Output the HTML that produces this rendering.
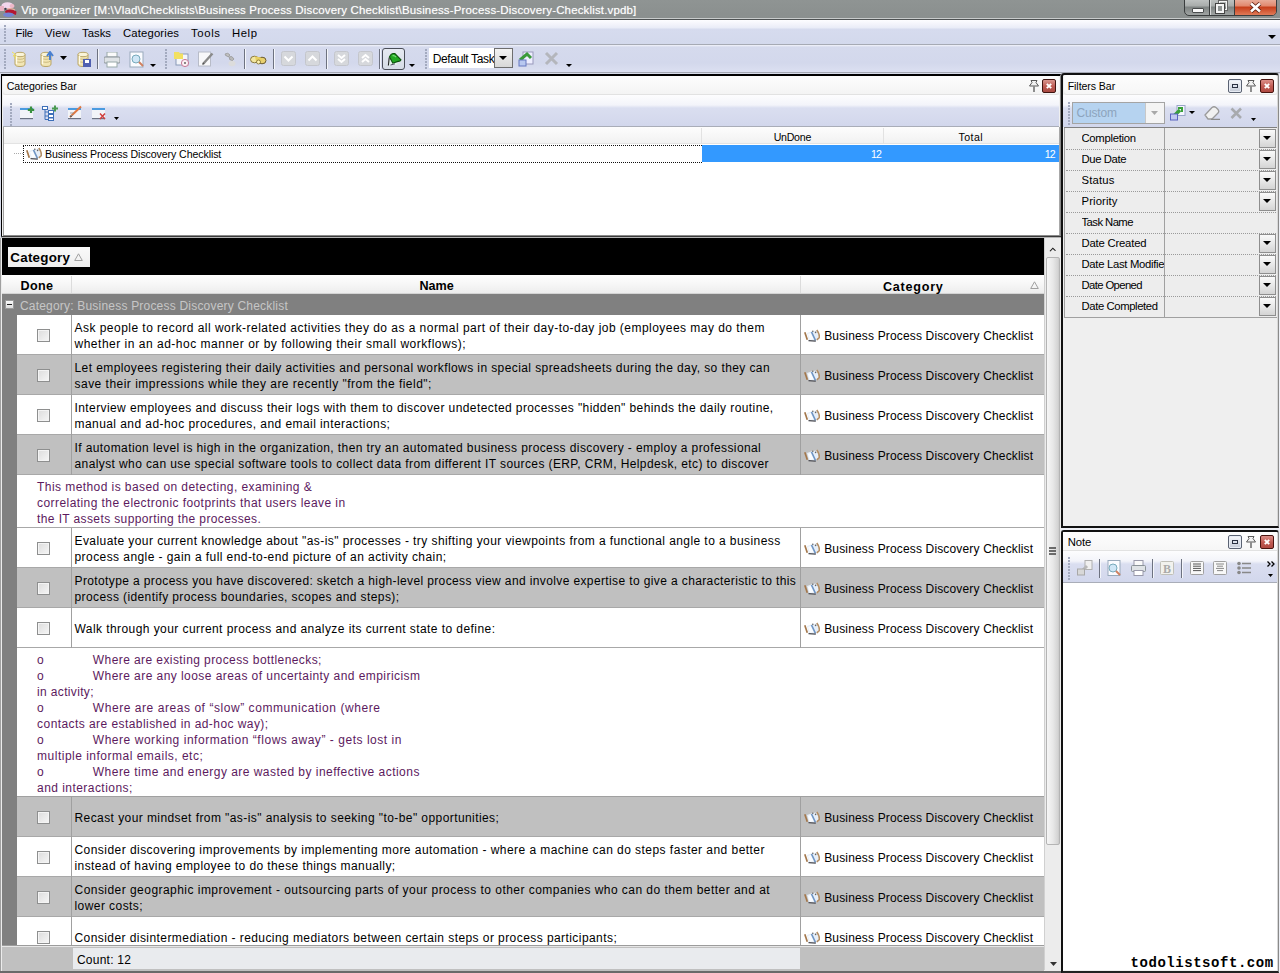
<!DOCTYPE html>
<html><head><meta charset="utf-8"><style>
html,body{margin:0;padding:0;}
body{width:1280px;height:973px;overflow:hidden;position:relative;background:#d8dcea;font-family:'Liberation Sans', sans-serif;}

</style></head><body>
<div style="position:absolute;left:0px;top:0px;width:1280px;height:18px;background:linear-gradient(#8f9493,#8a8f8e)"></div><div style="position:absolute;left:0px;top:18px;width:1280px;height:1px;background:#c9cccc"></div><div style="position:absolute;left:0px;top:19px;width:1280px;height:1px;background:#4e5253"></div><svg style="position:absolute;left:0px;top:1px" width="17" height="17" viewBox="0 0 17 17"><ellipse cx="7.5" cy="4.5" rx="6" ry="3.2" fill="#f2d6ec"/><rect x="0" y="5" width="4" height="5" fill="#eab4c4"/><ellipse cx="12" cy="5" rx="2.5" ry="2" fill="#eeb8c8"/><path d="M5 10Q10 6.5 16.5 10.5L16 14Q10 11 6 13Z" fill="#b41830"/><path d="M7 8Q11 7 15 9" stroke="#f0b0a0" stroke-width="1.2" fill="none"/><ellipse cx="8.5" cy="13.8" rx="5.5" ry="2.2" fill="#7584d2"/><circle cx="5.5" cy="7.8" r="1.1" fill="#3a3a48"/></svg><div style="position:absolute;left:21.25px;top:3.59px;font:400 11.5px/13.22px 'Liberation Sans', sans-serif;color:#fff;white-space:pre;letter-spacing:0.152px;text-shadow:0 0 1px rgba(255,255,255,.5)">Vip organizer [M:\Vlad\Checklists\Business Process Discovery Checklist\Business-Process-Discovery-Checklist.vpdb]</div><div style="position:absolute;left:1184px;top:-3px;width:91px;height:17px;border:1px solid #3a3d3e;border-radius:0 0 5px 5px;overflow:hidden;background:linear-gradient(#c4c8c7,#a9adac 45%,#7f8483 55%,#a0a4a3)"><div style="position:absolute;left:24px;top:0;width:1px;height:17px;background:#3a3d3e"></div><div style="position:absolute;left:25px;top:0;width:1px;height:17px;background:#d8dada"></div><div style="position:absolute;left:49px;top:0;width:1px;height:17px;background:#3a3d3e"></div><div style="position:absolute;left:50px;top:0;width:41px;height:17px;background:linear-gradient(#eab7a6,#e28a70 45%,#c7401c 55%,#e07a58)"></div></div><div style="position:absolute;left:1192px;top:8px;width:10px;height:3px;background:#f8f8f8;border:1px solid #4a4d4e;border-radius:1px"></div><div style="position:absolute;left:1219px;top:1px;width:6px;height:7px;border:1px solid #f4f4f4;box-shadow:0 0 0 1px #666"></div><div style="position:absolute;left:1216px;top:4px;width:4px;height:5px;border:2px solid #f4f4f4;background:#8f9493;box-shadow:0 0 0 1px #444"></div><svg style="position:absolute;left:1249px;top:2px" width="13" height="11" viewBox="0 0 13 11"><path d="M2 1.5 L11 9.5 M11 1.5 L2 9.5" stroke="#5a1d10" stroke-width="4.2"/><path d="M2 1.5 L11 9.5 M11 1.5 L2 9.5" stroke="#fff" stroke-width="2.6"/></svg><div style="position:absolute;left:0px;top:20px;width:1280px;height:24px;background:linear-gradient(#fdfdff 0px,#f1f2fa 5px,#e9ecf7 8px,#d6dbee 9px,#d3d9ec 24px)"></div><div style="position:absolute;left:0px;top:44px;width:1280px;height:1px;background:#a6aab4"></div><div style="position:absolute;left:4px;top:25px;width:2px;height:2px;background:#a3aabf"></div><div style="position:absolute;left:4px;top:28px;width:2px;height:2px;background:#a3aabf"></div><div style="position:absolute;left:4px;top:31px;width:2px;height:2px;background:#a3aabf"></div><div style="position:absolute;left:4px;top:34px;width:2px;height:2px;background:#a3aabf"></div><div style="position:absolute;left:4px;top:37px;width:2px;height:2px;background:#a3aabf"></div><div style="position:absolute;left:4px;top:40px;width:2px;height:2px;background:#a3aabf"></div><div style="position:absolute;left:15.6px;top:26.97px;font:400 11.3px/12.99px 'Liberation Sans', sans-serif;color:#000;white-space:pre;letter-spacing:-0.268px;">File</div><div style="position:absolute;left:45px;top:26.97px;font:400 11.3px/12.99px 'Liberation Sans', sans-serif;color:#000;white-space:pre;letter-spacing:0.234px;">View</div><div style="position:absolute;left:82px;top:26.97px;font:400 11.3px/12.99px 'Liberation Sans', sans-serif;color:#000;white-space:pre;letter-spacing:0.027px;">Tasks</div><div style="position:absolute;left:123px;top:26.97px;font:400 11.3px/12.99px 'Liberation Sans', sans-serif;color:#000;white-space:pre;letter-spacing:0.151px;">Categories</div><div style="position:absolute;left:191px;top:26.97px;font:400 11.3px/12.99px 'Liberation Sans', sans-serif;color:#000;white-space:pre;letter-spacing:0.656px;">Tools</div><div style="position:absolute;left:232px;top:26.97px;font:400 11.3px/12.99px 'Liberation Sans', sans-serif;color:#000;white-space:pre;letter-spacing:0.589px;">Help</div><svg style="position:absolute;left:1268px;top:35px" width="8" height="5" viewBox="0 0 8 5"><path d="M0 0H8L4 4Z" fill="#000"/></svg><div style="position:absolute;left:0px;top:45px;width:1280px;height:28px;background:linear-gradient(#f2f4fa 0px,#d5daed 2px,#d3d8ec 18px,#dce0f1 27px)"></div><div style="position:absolute;left:0px;top:72px;width:1280px;height:1px;background:#a4a8b4"></div><div style="position:absolute;left:4px;top:49px;width:2px;height:2px;background:#a3aabf"></div><div style="position:absolute;left:4px;top:52px;width:2px;height:2px;background:#a3aabf"></div><div style="position:absolute;left:4px;top:55px;width:2px;height:2px;background:#a3aabf"></div><div style="position:absolute;left:4px;top:58px;width:2px;height:2px;background:#a3aabf"></div><div style="position:absolute;left:4px;top:61px;width:2px;height:2px;background:#a3aabf"></div><div style="position:absolute;left:4px;top:64px;width:2px;height:2px;background:#a3aabf"></div><div style="position:absolute;left:4px;top:67px;width:2px;height:2px;background:#a3aabf"></div><div style="position:absolute;left:165px;top:49px;width:2px;height:2px;background:#a3aabf"></div><div style="position:absolute;left:165px;top:52px;width:2px;height:2px;background:#a3aabf"></div><div style="position:absolute;left:165px;top:55px;width:2px;height:2px;background:#a3aabf"></div><div style="position:absolute;left:165px;top:58px;width:2px;height:2px;background:#a3aabf"></div><div style="position:absolute;left:165px;top:61px;width:2px;height:2px;background:#a3aabf"></div><div style="position:absolute;left:165px;top:64px;width:2px;height:2px;background:#a3aabf"></div><div style="position:absolute;left:165px;top:67px;width:2px;height:2px;background:#a3aabf"></div><div style="position:absolute;left:425px;top:49px;width:2px;height:2px;background:#a3aabf"></div><div style="position:absolute;left:425px;top:52px;width:2px;height:2px;background:#a3aabf"></div><div style="position:absolute;left:425px;top:55px;width:2px;height:2px;background:#a3aabf"></div><div style="position:absolute;left:425px;top:58px;width:2px;height:2px;background:#a3aabf"></div><div style="position:absolute;left:425px;top:61px;width:2px;height:2px;background:#a3aabf"></div><div style="position:absolute;left:425px;top:64px;width:2px;height:2px;background:#a3aabf"></div><div style="position:absolute;left:425px;top:67px;width:2px;height:2px;background:#a3aabf"></div><div style="position:absolute;left:97px;top:49px;width:1px;height:20px;background:#6d7280"></div><div style="position:absolute;left:98px;top:49px;width:1px;height:20px;background:#f4f6fb"></div><div style="position:absolute;left:244px;top:49px;width:1px;height:20px;background:#6d7280"></div><div style="position:absolute;left:245px;top:49px;width:1px;height:20px;background:#f4f6fb"></div><div style="position:absolute;left:273px;top:49px;width:1px;height:20px;background:#6d7280"></div><div style="position:absolute;left:274px;top:49px;width:1px;height:20px;background:#f4f6fb"></div><div style="position:absolute;left:326px;top:49px;width:1px;height:20px;background:#6d7280"></div><div style="position:absolute;left:327px;top:49px;width:1px;height:20px;background:#f4f6fb"></div><div style="position:absolute;left:379px;top:49px;width:1px;height:20px;background:#6d7280"></div><div style="position:absolute;left:380px;top:49px;width:1px;height:20px;background:#f4f6fb"></div><svg style="position:absolute;left:12px;top:51px" width="16" height="17" viewBox="0 0 16 17"><path d="M3 3.5V13A5 2.5 0 0 0 13 13V3.5" fill="#f2e6b4" stroke="#b9a567" stroke-width="1"/><ellipse cx="8" cy="3.5" rx="5" ry="2.2" fill="#faf4d8" stroke="#b9a567"/><path d="M3.5 7A4.8 2 0 0 0 12.5 7M3.5 10A4.8 2 0 0 0 12.5 10" fill="none" stroke="#cdbb80"/><path d="M4.5 5V13" stroke="#fffbe8" stroke-width="1.3"/><path d="M0 1L3 3L1 5L4 5L3 8" stroke="#f0e060" fill="none"/></svg><svg style="position:absolute;left:38px;top:51px" width="16" height="17" viewBox="0 0 16 17"><path d="M3 3.5V13A5 2.5 0 0 0 13 13V3.5" fill="#f2e6b4" stroke="#b9a567" stroke-width="1"/><ellipse cx="8" cy="3.5" rx="5" ry="2.2" fill="#faf4d8" stroke="#b9a567"/><path d="M3.5 7A4.8 2 0 0 0 12.5 7M3.5 10A4.8 2 0 0 0 12.5 10" fill="none" stroke="#cdbb80"/><path d="M4.5 5V13" stroke="#fffbe8" stroke-width="1.3"/><path d="M12 9V2M9 5L12 1L15 5" stroke="#4a80d0" stroke-width="2" fill="none"/></svg><svg style="position:absolute;left:60px;top:56px" width="7" height="5" viewBox="0 0 7 5"><path d="M0 0H7L3.5 4Z" fill="#000"/></svg><svg style="position:absolute;left:75px;top:51px" width="16" height="17" viewBox="0 0 16 17"><path d="M3 3.5V13A5 2.5 0 0 0 13 13V3.5" fill="#f2e6b4" stroke="#b9a567" stroke-width="1"/><ellipse cx="8" cy="3.5" rx="5" ry="2.2" fill="#faf4d8" stroke="#b9a567"/><path d="M3.5 7A4.8 2 0 0 0 12.5 7M3.5 10A4.8 2 0 0 0 12.5 10" fill="none" stroke="#cdbb80"/><path d="M4.5 5V13" stroke="#fffbe8" stroke-width="1.3"/><rect x="8" y="8" width="8" height="8" fill="#5060b0"/><rect x="10" y="9" width="4" height="3" fill="#fff"/></svg><svg style="position:absolute;left:104px;top:52px" width="16" height="16" viewBox="0 0 16 16"><rect x="3" y="0" width="10" height="5" fill="#fafafa" stroke="#9aa"/><rect x="0" y="5" width="16" height="6" rx="1" fill="#dfe3e6" stroke="#8a9298"/><rect x="3" y="10" width="10" height="5" fill="#fff" stroke="#9aa"/></svg><svg style="position:absolute;left:129px;top:51px" width="16" height="17" viewBox="0 0 16 17"><rect x="1" y="1" width="13" height="15" fill="#fafbff" stroke="#9ab"/><circle cx="7" cy="8" r="4" fill="#cfe6f6" stroke="#7ab"/><path d="M10 11L14 15" stroke="#d08060" stroke-width="2"/></svg><svg style="position:absolute;left:150px;top:64px" width="6" height="4" viewBox="0 0 6 4"><path d="M0 0H6L3 3Z" fill="#000"/></svg><svg style="position:absolute;left:174px;top:51px" width="16" height="16" viewBox="0 0 16 16"><rect x="2" y="3" width="12" height="11" fill="#f4f6fa" stroke="#8a9ab8" stroke-width="1"/><path d="M0 1H5L6 2.5H9V8H0Z" fill="#f2e060"/><circle cx="11" cy="12" r="3.6" fill="#fbf0f4" stroke="#c87898" stroke-width="1"/><circle cx="11" cy="12" r="0.9" fill="#555"/></svg><svg style="position:absolute;left:198px;top:51px" width="16" height="16" viewBox="0 0 16 16"><rect x="0.5" y="1" width="12" height="14" fill="#f8f8fa" stroke="#b8bcc8"/><path d="M5 13L14.5 2.5" stroke="#8a8a8a" stroke-width="2.4"/><path d="M4.5 13.5L6 12" stroke="#555" stroke-width="1.2"/></svg><svg style="position:absolute;left:222px;top:51px" width="16" height="16" viewBox="0 0 16 16"><path d="M3 3Q6 1 8 4L6 6Q5 4 4 5Z" fill="#c0c0c0" stroke="#999" stroke-width="0.8"/><path d="M7 6Q10 4 12 8L10 10Q9 8 8 9Z" fill="#b8b8b8" stroke="#999" stroke-width="0.8"/><ellipse cx="10" cy="12.5" rx="3.5" ry="2.8" fill="#dcdcdc"/></svg><svg style="position:absolute;left:249px;top:54px" width="18" height="12" viewBox="0 0 18 12"><ellipse cx="5.5" cy="5.5" rx="4" ry="3.3" fill="#f2e6a0" stroke="#8a7a40" stroke-width="1"/><ellipse cx="13" cy="6.5" rx="4" ry="3.3" fill="#e8d070" stroke="#6a5a30" stroke-width="1"/><path d="M6 2.5L12 3.5L13 7L7 7Z" fill="#e8cf60"/><ellipse cx="9.5" cy="8" rx="2" ry="2" fill="#fff4b0" stroke="#7a6a30" stroke-width="0.8"/></svg><svg style="position:absolute;left:281px;top:51px" width="15" height="15" viewBox="0 0 15 15"><rect x="0.5" y="0.5" width="14" height="14" rx="2" fill="#d6d8dc" stroke="#c4c6cc"/><path d="M3.5 5.5L7.5 9.5L11.5 5.5" stroke="#fff" stroke-width="2" fill="none"/></svg><svg style="position:absolute;left:305px;top:51px" width="15" height="15" viewBox="0 0 15 15"><rect x="0.5" y="0.5" width="14" height="14" rx="2" fill="#d6d8dc" stroke="#c4c6cc"/><path d="M3.5 9.5L7.5 5.5L11.5 9.5" stroke="#fff" stroke-width="2" fill="none"/></svg><svg style="position:absolute;left:334px;top:51px" width="15" height="15" viewBox="0 0 15 15"><rect x="0.5" y="0.5" width="14" height="14" rx="2" fill="#d6d8dc" stroke="#c4c6cc"/><path d="M4 4L7.5 7L11 4M4 8L7.5 11L11 8" stroke="#fff" stroke-width="2" fill="none"/></svg><svg style="position:absolute;left:358px;top:51px" width="15" height="15" viewBox="0 0 15 15"><rect x="0.5" y="0.5" width="14" height="14" rx="2" fill="#d6d8dc" stroke="#c4c6cc"/><path d="M4 7L7.5 4L11 7M4 11L7.5 8L11 11" stroke="#fff" stroke-width="2" fill="none"/></svg><div style="position:absolute;left:382px;top:48px;width:23px;height:22px;box-sizing:border-box;border:1px solid #4a4e58;border-radius:3px;background:linear-gradient(#e6eaf2,#d6dce6)"></div><svg style="position:absolute;left:386px;top:51px" width="16" height="16" viewBox="0 0 16 16"><path d="M2 14.5L3 6L12 9L11 13.5Z" fill="#e4f4ec"/><path d="M3.2 6.5L2.4 14.5" stroke="#222" stroke-width="1.1"/><path d="M3.5 6Q5 1.8 8.8 2.6L15 8.8Q14.2 10.6 12 10.4L6.8 12.2Z" fill="#22a822" stroke="#0b4f0b" stroke-width="1.1"/><path d="M6.5 5Q8 4 10 6" stroke="#7ade7a" stroke-width="1.2" fill="none"/><path d="M4.5 14L9 12.8" stroke="#556" stroke-width="1"/></svg><svg style="position:absolute;left:409px;top:64px" width="6" height="4" viewBox="0 0 6 4"><path d="M0 0H6L3 3Z" fill="#000"/></svg><div style="position:absolute;left:429px;top:48px;width:84px;height:20px;background:#fff"></div><div style="position:absolute;left:432.7px;top:52.74px;font:400 12px/13.80px 'Liberation Sans', sans-serif;color:#000;white-space:pre;letter-spacing:-0.347px;">Default Task</div><div style="position:absolute;left:494px;top:48px;width:19px;height:20px;background:linear-gradient(#f3f3f3,#d8d8d8);border:1px solid #6e6e6e;box-sizing:border-box"></div><svg style="position:absolute;left:499px;top:56px" width="8" height="5" viewBox="0 0 8 5"><path d="M0 0H8L4 4Z" fill="#000"/></svg><svg style="position:absolute;left:518px;top:51px" width="17" height="16" viewBox="0 0 17 16"><rect x="5" y="1" width="10" height="12" fill="#eef" stroke="#99b"/><path d="M2 9L9 3L13 7" stroke="#3a9a3a" stroke-width="3" fill="none"/><rect x="1" y="9" width="7" height="6" fill="#b8c8f0" stroke="#6678c0"/></svg><svg style="position:absolute;left:544px;top:51px" width="15" height="15" viewBox="0 0 15 15"><path d="M2 2L13 13M13 2L2 13" stroke="#b4b6bc" stroke-width="3"/></svg><svg style="position:absolute;left:566px;top:64px" width="6" height="4" viewBox="0 0 6 4"><path d="M0 0H6L3 3Z" fill="#000"/></svg><div style="position:absolute;left:1px;top:74px;width:1060px;height:164px;background:#f0f0f0;border:1px solid #000;box-sizing:border-box;border-right-color:#888"></div><div style="position:absolute;left:2px;top:75px;width:1058px;height:1px;background:#000"></div><div style="position:absolute;left:3px;top:76px;width:1056px;height:19px;background:linear-gradient(#fdfdfd,#f3f3f3);border-radius:3px;box-shadow:inset 0 -1px 0 #e2e2e2"></div><div style="position:absolute;left:6.75px;top:80.41px;font:400 10.6px/12.19px 'Liberation Sans', sans-serif;color:#000;white-space:pre;letter-spacing:-0.052px;">Categories Bar</div><svg style="position:absolute;left:1028px;top:79px" width="12" height="14" viewBox="0 0 12 14"><path d="M3 1.5H9L8 3.5L10.5 7H1.5L4 3.5Z" fill="#f2f2f2" stroke="#5a5a5a" stroke-width="1"/><path d="M6 7.5V13" stroke="#555" stroke-width="1.3"/></svg><div style="position:absolute;left:1042px;top:79px;width:14px;height:14px;background:linear-gradient(#d8958e,#bd5a52 55%,#a94a42);border:1px solid #3e1410;border-radius:2px;box-sizing:border-box"></div><svg style="position:absolute;left:1045px;top:82px" width="8" height="8" viewBox="0 0 8 8"><path d="M1.8 1.8L6.2 6.2M6.2 1.8L1.8 6.2" stroke="#fff" stroke-width="1.9"/></svg><div style="position:absolute;left:3px;top:95px;width:1056px;height:32px;background:linear-gradient(#fdfdfe 0px,#f3f4fa 10px,#dadef0 13px,#d2d7ec 31px)"></div><div style="position:absolute;left:3px;top:126px;width:1056px;height:1px;background:#a9adb8"></div><div style="position:absolute;left:10px;top:103px;width:2px;height:2px;background:#a3aabf"></div><div style="position:absolute;left:10px;top:106px;width:2px;height:2px;background:#a3aabf"></div><div style="position:absolute;left:10px;top:109px;width:2px;height:2px;background:#a3aabf"></div><div style="position:absolute;left:10px;top:112px;width:2px;height:2px;background:#a3aabf"></div><div style="position:absolute;left:10px;top:115px;width:2px;height:2px;background:#a3aabf"></div><div style="position:absolute;left:10px;top:118px;width:2px;height:2px;background:#a3aabf"></div><div style="position:absolute;left:10px;top:121px;width:2px;height:2px;background:#a3aabf"></div><div style="position:absolute;left:10px;top:124px;width:2px;height:2px;background:#a3aabf"></div><svg style="position:absolute;left:19px;top:105px" width="16" height="15" viewBox="0 0 16 15"><rect x="1" y="3" width="13" height="10" fill="#f2f4f8"/><rect x="1" y="3" width="13" height="2" fill="#4a9ae0"/><rect x="1" y="13" width="13" height="1.2" fill="#6a7282"/><path d="M12 1.5V8M8.8 4.8H15.2" stroke="#3a9040" stroke-width="2.2"/></svg><svg style="position:absolute;left:42px;top:105px" width="17" height="16" viewBox="0 0 17 16"><rect x="0.5" y="1.5" width="5" height="3" fill="#fff" stroke="#3d6fb8"/><rect x="6.5" y="5.5" width="5" height="3" fill="#fff" stroke="#3d6fb8"/><rect x="6.5" y="9.5" width="5" height="3" fill="#fff" stroke="#3d6fb8"/><rect x="6.5" y="13" width="5" height="2.5" fill="#fff" stroke="#3d6fb8"/><path d="M3 4.5V14.5H6.5M3 7H6.5M3 11H6.5" stroke="#3d6fb8" fill="none"/><path d="M13 0.5V6.5M10 3.5H16" stroke="#4a9a50" stroke-width="2"/></svg><svg style="position:absolute;left:67px;top:105px" width="16" height="15" viewBox="0 0 16 15"><rect x="1" y="3" width="13" height="10" fill="#f2f4f8"/><rect x="1" y="3" width="13" height="2" fill="#4a9ae0"/><rect x="1" y="13" width="13" height="1.2" fill="#6a7282"/><path d="M3 12L14 1.5" stroke="#e07840" stroke-width="2"/><path d="M3 12L5 11" stroke="#555" stroke-width="1"/><path d="M3 8H7M3 10.5H6" stroke="#888" stroke-width="0.8"/></svg><svg style="position:absolute;left:91px;top:105px" width="16" height="15" viewBox="0 0 16 15"><rect x="1" y="3" width="13" height="10" fill="#f2f4f8"/><rect x="1" y="3" width="13" height="2" fill="#4a9ae0"/><rect x="1" y="13" width="13" height="1.2" fill="#6a7282"/><path d="M9 8.5L14 14M14 8.5L9 14" stroke="#d04040" stroke-width="1.5"/></svg><svg style="position:absolute;left:114px;top:117px" width="5" height="4" viewBox="0 0 5 4"><path d="M0 0H5L2.5 3Z" fill="#000"/></svg><div style="position:absolute;left:3px;top:127px;width:1056px;height:108px;background:#fff"></div><div style="position:absolute;left:3px;top:127px;width:1056px;height:17px;background:linear-gradient(#fdfdfd,#f1f1f1);box-shadow:inset 0 -1px 0 #e3e3e3"></div><div style="position:absolute;left:701px;top:128px;width:1px;height:16px;background:#e2e2e2"></div><div style="position:absolute;left:883px;top:128px;width:1px;height:16px;background:#e2e2e2"></div><div style="position:absolute;left:773.7px;top:131.01px;font:400 10.6px/12.19px 'Liberation Sans', sans-serif;color:#000;white-space:pre;letter-spacing:-0.255px;">UnDone</div><div style="position:absolute;left:958.4px;top:131.01px;font:400 10.6px/12.19px 'Liberation Sans', sans-serif;color:#000;white-space:pre;letter-spacing:0.452px;">Total</div><div style="position:absolute;left:702px;top:145px;width:357px;height:17px;background:#3399ff"></div><div style="position:absolute;left:871px;top:148.41px;font:400 10.6px/12.19px 'Liberation Sans', sans-serif;color:#fff;white-space:pre;letter-spacing:-0.897px;">12</div><div style="position:absolute;left:1044.8px;top:148.41px;font:400 10.6px/12.19px 'Liberation Sans', sans-serif;color:#fff;white-space:pre;letter-spacing:-0.897px;">12</div><div style="position:absolute;left:23px;top:145px;width:679px;height:18px;box-sizing:border-box;border:1px dotted #111;border-right:none"></div><div style="position:absolute;left:14px;top:153px;width:9px;height:0;border-top:1px dotted #aaa"></div><svg style="position:absolute;left:26px;top:147px" width="16" height="13" viewBox="0 0 16 13"><path d="M3 4L8.5 2L13 1.5L14.8 8L11.5 12L5 12Z" fill="#e6eef8"/><path d="M4 5L8 3.5L10 10L6 11Z" fill="#fafcff"/><path d="M7.5 3L11.5 11.5" stroke="#6f95c4" stroke-width="1.7"/><path d="M0.8 3.2L3.3 10.8" stroke="#a4784c" stroke-width="1.7"/><path d="M12.8 1Q15.5 4.5 15.4 8.5L12.8 10.8" stroke="#b48e64" stroke-width="1.6" fill="none"/><path d="M4.5 11.6L11.8 12.2" stroke="#4a4a50" stroke-width="1.3"/><circle cx="8.8" cy="2.2" r="0.8" fill="#666"/><circle cx="11.6" cy="3.4" r="0.8" fill="#666"/></svg><div style="position:absolute;left:45px;top:148.41px;font:400 10.6px/12.19px 'Liberation Sans', sans-serif;color:#000;white-space:pre;letter-spacing:-0.093px;">Business Process Discovery Checklist</div><div style="position:absolute;left:3px;top:127px;width:1px;height:108px;background:#a0a0a0"></div><div style="position:absolute;left:3px;top:235px;width:1057px;height:1px;background:#8a8a8a"></div><div style="position:absolute;left:1059px;top:127px;width:1px;height:108px;background:#a8a8a8"></div><div style="position:absolute;left:1px;top:236px;width:1061px;height:1px;background:#3a3a3a"></div><div style="position:absolute;left:1px;top:237px;width:1061px;height:1px;background:#b4b4b4"></div><div style="position:absolute;left:0px;top:238px;width:1062px;height:735px;background:#a0a0a0"></div><div style="position:absolute;left:1px;top:238px;width:1061px;height:735px;background:#ececec"></div><div style="position:absolute;left:2px;top:238px;width:1042px;height:37px;background:#000"></div><div style="position:absolute;left:8px;top:247px;width:82px;height:20px;background:linear-gradient(#fafafa,#eeeeee)"></div><div style="position:absolute;left:10.3px;top:249.87px;font:700 13.4px/15.41px 'Liberation Sans', sans-serif;color:#000;white-space:pre;letter-spacing:0.236px;">Category</div><svg style="position:absolute;left:74px;top:253px" width="9" height="8" viewBox="0 0 9 8"><path d="M4.5 0.8L8.3 7.5H0.7Z" fill="none" stroke="#a0a0a0" stroke-width="1"/></svg><div style="position:absolute;left:2px;top:275px;width:1042px;height:19px;background:linear-gradient(#ffffff,#f6f6f6 50%,#ececec)"></div><div style="position:absolute;left:2px;top:293px;width:1042px;height:1px;background:#d4d4d4"></div><div style="position:absolute;left:71px;top:276px;width:1px;height:17px;background:#dcdcdc"></div><div style="position:absolute;left:800px;top:276px;width:1px;height:17px;background:#dcdcdc"></div><div style="position:absolute;left:20.5px;top:279.30px;font:700 12.6px/14.49px 'Liberation Sans', sans-serif;color:#000;white-space:pre;letter-spacing:0.339px;">Done</div><div style="position:absolute;left:419.5px;top:279.10px;font:700 12.6px/14.49px 'Liberation Sans', sans-serif;color:#000;white-space:pre;letter-spacing:-0.004px;">Name</div><div style="position:absolute;left:883px;top:279.90px;font:700 12.6px/14.49px 'Liberation Sans', sans-serif;color:#000;white-space:pre;letter-spacing:0.744px;">Category</div><svg style="position:absolute;left:1030px;top:281px" width="9" height="8" viewBox="0 0 9 8"><path d="M4.5 0.8L8.3 7.5H0.7Z" fill="none" stroke="#a0a0a0" stroke-width="1"/></svg><div style="position:absolute;left:2px;top:294px;width:1042px;height:21px;background:#808080"></div><div style="position:absolute;left:5px;top:300px;width:9px;height:9px;background:linear-gradient(#fafafa,#dcdcdc);box-sizing:border-box;border:1px solid #9a9a9a"></div><div style="position:absolute;left:7px;top:304px;width:5px;height:1px;background:#222"></div><div style="position:absolute;left:19.9px;top:300.34px;font:400 12px/13.80px 'Liberation Sans', sans-serif;color:#c6c6c6;white-space:pre;letter-spacing:0.203px;">Category: Business Process Discovery Checklist</div><div style="position:absolute;left:2px;top:315px;width:15px;height:630px;background:#808080"></div><div style="position:absolute;left:17px;top:315px;width:1027px;height:40px;background:#ffffff"></div><div style="position:absolute;left:17px;top:354px;width:1027px;height:1px;background:#a8a8a8"></div><div style="position:absolute;left:71px;top:315px;width:1px;height:40px;background:#a0a0a0"></div><div style="position:absolute;left:800px;top:315px;width:1px;height:40px;background:#a0a0a0"></div><div style="position:absolute;left:37px;top:329px;width:13px;height:13px;box-sizing:border-box;border:1px solid #8e8f8f;background:linear-gradient(135deg,#dcdcdc,#f6f6f6);box-shadow:inset 0 0 0 1px #f4f4f4"></div><div style="position:absolute;left:74.5px;top:321.64px;font:400 12px/13.80px 'Liberation Sans', sans-serif;color:#000;white-space:pre;letter-spacing:0.467px;">Ask people to record all work-related activities they do as a normal part of their day-to-day job (employees may do them</div><div style="position:absolute;left:74.5px;top:337.64px;font:400 12px/13.80px 'Liberation Sans', sans-serif;color:#000;white-space:pre;letter-spacing:0.508px;">whether in an ad-hoc manner or by following their small workflows);</div><svg style="position:absolute;left:804px;top:328.5px" width="16" height="13" viewBox="0 0 16 13"><path d="M3 4L8.5 2L13 1.5L14.8 8L11.5 12L5 12Z" fill="#e6eef8"/><path d="M4 5L8 3.5L10 10L6 11Z" fill="#fafcff"/><path d="M7.5 3L11.5 11.5" stroke="#6f95c4" stroke-width="1.7"/><path d="M0.8 3.2L3.3 10.8" stroke="#a4784c" stroke-width="1.7"/><path d="M12.8 1Q15.5 4.5 15.4 8.5L12.8 10.8" stroke="#b48e64" stroke-width="1.6" fill="none"/><path d="M4.5 11.6L11.8 12.2" stroke="#4a4a50" stroke-width="1.3"/><circle cx="8.8" cy="2.2" r="0.8" fill="#666"/><circle cx="11.6" cy="3.4" r="0.8" fill="#666"/></svg><div style="position:absolute;left:824.2px;top:330.14px;font:400 12px/13.80px 'Liberation Sans', sans-serif;color:#000;white-space:pre;letter-spacing:0.157px;">Business Process Discovery Checklist</div><div style="position:absolute;left:17px;top:355px;width:1027px;height:40px;background:#c0c0c0"></div><div style="position:absolute;left:17px;top:394px;width:1027px;height:1px;background:#a8a8a8"></div><div style="position:absolute;left:71px;top:355px;width:1px;height:40px;background:#a0a0a0"></div><div style="position:absolute;left:800px;top:355px;width:1px;height:40px;background:#a0a0a0"></div><div style="position:absolute;left:37px;top:369px;width:13px;height:13px;box-sizing:border-box;border:1px solid #8e8f8f;background:linear-gradient(135deg,#dcdcdc,#f6f6f6);box-shadow:inset 0 0 0 1px #f4f4f4"></div><div style="position:absolute;left:74.5px;top:361.64px;font:400 12px/13.80px 'Liberation Sans', sans-serif;color:#000;white-space:pre;letter-spacing:0.407px;">Let employees registering their daily activities and personal workflows in special spreadsheets during the day, so they can</div><div style="position:absolute;left:74.5px;top:377.64px;font:400 12px/13.80px 'Liberation Sans', sans-serif;color:#000;white-space:pre;letter-spacing:0.480px;">save their impressions while they are recently &quot;from the field&quot;;</div><svg style="position:absolute;left:804px;top:368.5px" width="16" height="13" viewBox="0 0 16 13"><path d="M3 4L8.5 2L13 1.5L14.8 8L11.5 12L5 12Z" fill="#e6eef8"/><path d="M4 5L8 3.5L10 10L6 11Z" fill="#fafcff"/><path d="M7.5 3L11.5 11.5" stroke="#6f95c4" stroke-width="1.7"/><path d="M0.8 3.2L3.3 10.8" stroke="#a4784c" stroke-width="1.7"/><path d="M12.8 1Q15.5 4.5 15.4 8.5L12.8 10.8" stroke="#b48e64" stroke-width="1.6" fill="none"/><path d="M4.5 11.6L11.8 12.2" stroke="#4a4a50" stroke-width="1.3"/><circle cx="8.8" cy="2.2" r="0.8" fill="#666"/><circle cx="11.6" cy="3.4" r="0.8" fill="#666"/></svg><div style="position:absolute;left:824.2px;top:370.14px;font:400 12px/13.80px 'Liberation Sans', sans-serif;color:#000;white-space:pre;letter-spacing:0.157px;">Business Process Discovery Checklist</div><div style="position:absolute;left:17px;top:395px;width:1027px;height:40px;background:#ffffff"></div><div style="position:absolute;left:17px;top:434px;width:1027px;height:1px;background:#a8a8a8"></div><div style="position:absolute;left:71px;top:395px;width:1px;height:40px;background:#a0a0a0"></div><div style="position:absolute;left:800px;top:395px;width:1px;height:40px;background:#a0a0a0"></div><div style="position:absolute;left:37px;top:409px;width:13px;height:13px;box-sizing:border-box;border:1px solid #8e8f8f;background:linear-gradient(135deg,#dcdcdc,#f6f6f6);box-shadow:inset 0 0 0 1px #f4f4f4"></div><div style="position:absolute;left:74.5px;top:401.64px;font:400 12px/13.80px 'Liberation Sans', sans-serif;color:#000;white-space:pre;letter-spacing:0.409px;">Interview employees and discuss their logs with them to discover undetected processes &quot;hidden&quot; behinds the daily routine,</div><div style="position:absolute;left:74.5px;top:417.64px;font:400 12px/13.80px 'Liberation Sans', sans-serif;color:#000;white-space:pre;letter-spacing:0.434px;">manual and ad-hoc procedures, and email interactions;</div><svg style="position:absolute;left:804px;top:408.5px" width="16" height="13" viewBox="0 0 16 13"><path d="M3 4L8.5 2L13 1.5L14.8 8L11.5 12L5 12Z" fill="#e6eef8"/><path d="M4 5L8 3.5L10 10L6 11Z" fill="#fafcff"/><path d="M7.5 3L11.5 11.5" stroke="#6f95c4" stroke-width="1.7"/><path d="M0.8 3.2L3.3 10.8" stroke="#a4784c" stroke-width="1.7"/><path d="M12.8 1Q15.5 4.5 15.4 8.5L12.8 10.8" stroke="#b48e64" stroke-width="1.6" fill="none"/><path d="M4.5 11.6L11.8 12.2" stroke="#4a4a50" stroke-width="1.3"/><circle cx="8.8" cy="2.2" r="0.8" fill="#666"/><circle cx="11.6" cy="3.4" r="0.8" fill="#666"/></svg><div style="position:absolute;left:824.2px;top:410.14px;font:400 12px/13.80px 'Liberation Sans', sans-serif;color:#000;white-space:pre;letter-spacing:0.157px;">Business Process Discovery Checklist</div><div style="position:absolute;left:17px;top:435px;width:1027px;height:40px;background:#c0c0c0"></div><div style="position:absolute;left:17px;top:474px;width:1027px;height:1px;background:#a8a8a8"></div><div style="position:absolute;left:71px;top:435px;width:1px;height:40px;background:#a0a0a0"></div><div style="position:absolute;left:800px;top:435px;width:1px;height:40px;background:#a0a0a0"></div><div style="position:absolute;left:37px;top:449px;width:13px;height:13px;box-sizing:border-box;border:1px solid #8e8f8f;background:linear-gradient(135deg,#dcdcdc,#f6f6f6);box-shadow:inset 0 0 0 1px #f4f4f4"></div><div style="position:absolute;left:74.5px;top:441.64px;font:400 12px/13.80px 'Liberation Sans', sans-serif;color:#000;white-space:pre;letter-spacing:0.405px;">If automation level is high in the organization, then try an automated business process discovery - employ a professional</div><div style="position:absolute;left:74.5px;top:457.64px;font:400 12px/13.80px 'Liberation Sans', sans-serif;color:#000;white-space:pre;letter-spacing:0.395px;">analyst who can use special software tools to collect data from different IT sources (ERP, CRM, Helpdesk, etc) to discover</div><svg style="position:absolute;left:804px;top:448.5px" width="16" height="13" viewBox="0 0 16 13"><path d="M3 4L8.5 2L13 1.5L14.8 8L11.5 12L5 12Z" fill="#e6eef8"/><path d="M4 5L8 3.5L10 10L6 11Z" fill="#fafcff"/><path d="M7.5 3L11.5 11.5" stroke="#6f95c4" stroke-width="1.7"/><path d="M0.8 3.2L3.3 10.8" stroke="#a4784c" stroke-width="1.7"/><path d="M12.8 1Q15.5 4.5 15.4 8.5L12.8 10.8" stroke="#b48e64" stroke-width="1.6" fill="none"/><path d="M4.5 11.6L11.8 12.2" stroke="#4a4a50" stroke-width="1.3"/><circle cx="8.8" cy="2.2" r="0.8" fill="#666"/><circle cx="11.6" cy="3.4" r="0.8" fill="#666"/></svg><div style="position:absolute;left:824.2px;top:450.14px;font:400 12px/13.80px 'Liberation Sans', sans-serif;color:#000;white-space:pre;letter-spacing:0.157px;">Business Process Discovery Checklist</div><div style="position:absolute;left:17px;top:475px;width:1027px;height:53px;background:#fff"></div><div style="position:absolute;left:17px;top:527px;width:1027px;height:1px;background:#a8a8a8"></div><div style="position:absolute;left:37.1px;top:481.14px;font:400 12px/13.80px 'Liberation Sans', sans-serif;color:#5c1a5e;white-space:pre;letter-spacing:0.425px;">This method is based on detecting, examining &amp;</div><div style="position:absolute;left:37.1px;top:497.14px;font:400 12px/13.80px 'Liberation Sans', sans-serif;color:#5c1a5e;white-space:pre;letter-spacing:0.426px;">correlating the electronic footprints that users leave in</div><div style="position:absolute;left:37.1px;top:513.14px;font:400 12px/13.80px 'Liberation Sans', sans-serif;color:#5c1a5e;white-space:pre;letter-spacing:0.381px;">the IT assets supporting the processes.</div><div style="position:absolute;left:17px;top:528px;width:1027px;height:40px;background:#ffffff"></div><div style="position:absolute;left:17px;top:567px;width:1027px;height:1px;background:#a8a8a8"></div><div style="position:absolute;left:71px;top:528px;width:1px;height:40px;background:#a0a0a0"></div><div style="position:absolute;left:800px;top:528px;width:1px;height:40px;background:#a0a0a0"></div><div style="position:absolute;left:37px;top:542px;width:13px;height:13px;box-sizing:border-box;border:1px solid #8e8f8f;background:linear-gradient(135deg,#dcdcdc,#f6f6f6);box-shadow:inset 0 0 0 1px #f4f4f4"></div><div style="position:absolute;left:74.5px;top:534.64px;font:400 12px/13.80px 'Liberation Sans', sans-serif;color:#000;white-space:pre;letter-spacing:0.424px;">Evaluate your current knowledge about &quot;as-is&quot; processes - try shifting your viewpoints from a functional angle to a business</div><div style="position:absolute;left:74.5px;top:550.64px;font:400 12px/13.80px 'Liberation Sans', sans-serif;color:#000;white-space:pre;letter-spacing:0.429px;">process angle - gain a full end-to-end picture of an activity chain;</div><svg style="position:absolute;left:804px;top:541.5px" width="16" height="13" viewBox="0 0 16 13"><path d="M3 4L8.5 2L13 1.5L14.8 8L11.5 12L5 12Z" fill="#e6eef8"/><path d="M4 5L8 3.5L10 10L6 11Z" fill="#fafcff"/><path d="M7.5 3L11.5 11.5" stroke="#6f95c4" stroke-width="1.7"/><path d="M0.8 3.2L3.3 10.8" stroke="#a4784c" stroke-width="1.7"/><path d="M12.8 1Q15.5 4.5 15.4 8.5L12.8 10.8" stroke="#b48e64" stroke-width="1.6" fill="none"/><path d="M4.5 11.6L11.8 12.2" stroke="#4a4a50" stroke-width="1.3"/><circle cx="8.8" cy="2.2" r="0.8" fill="#666"/><circle cx="11.6" cy="3.4" r="0.8" fill="#666"/></svg><div style="position:absolute;left:824.2px;top:543.14px;font:400 12px/13.80px 'Liberation Sans', sans-serif;color:#000;white-space:pre;letter-spacing:0.157px;">Business Process Discovery Checklist</div><div style="position:absolute;left:17px;top:568px;width:1027px;height:40px;background:#c0c0c0"></div><div style="position:absolute;left:17px;top:607px;width:1027px;height:1px;background:#a8a8a8"></div><div style="position:absolute;left:71px;top:568px;width:1px;height:40px;background:#a0a0a0"></div><div style="position:absolute;left:800px;top:568px;width:1px;height:40px;background:#a0a0a0"></div><div style="position:absolute;left:37px;top:582px;width:13px;height:13px;box-sizing:border-box;border:1px solid #8e8f8f;background:linear-gradient(135deg,#dcdcdc,#f6f6f6);box-shadow:inset 0 0 0 1px #f4f4f4"></div><div style="position:absolute;left:74.5px;top:574.64px;font:400 12px/13.80px 'Liberation Sans', sans-serif;color:#000;white-space:pre;letter-spacing:0.380px;">Prototype a process you have discovered: sketch a high-level process view and involve expertise to give a characteristic to this</div><div style="position:absolute;left:74.5px;top:590.64px;font:400 12px/13.80px 'Liberation Sans', sans-serif;color:#000;white-space:pre;letter-spacing:0.394px;">process (identify process boundaries, scopes and steps);</div><svg style="position:absolute;left:804px;top:581.5px" width="16" height="13" viewBox="0 0 16 13"><path d="M3 4L8.5 2L13 1.5L14.8 8L11.5 12L5 12Z" fill="#e6eef8"/><path d="M4 5L8 3.5L10 10L6 11Z" fill="#fafcff"/><path d="M7.5 3L11.5 11.5" stroke="#6f95c4" stroke-width="1.7"/><path d="M0.8 3.2L3.3 10.8" stroke="#a4784c" stroke-width="1.7"/><path d="M12.8 1Q15.5 4.5 15.4 8.5L12.8 10.8" stroke="#b48e64" stroke-width="1.6" fill="none"/><path d="M4.5 11.6L11.8 12.2" stroke="#4a4a50" stroke-width="1.3"/><circle cx="8.8" cy="2.2" r="0.8" fill="#666"/><circle cx="11.6" cy="3.4" r="0.8" fill="#666"/></svg><div style="position:absolute;left:824.2px;top:583.14px;font:400 12px/13.80px 'Liberation Sans', sans-serif;color:#000;white-space:pre;letter-spacing:0.157px;">Business Process Discovery Checklist</div><div style="position:absolute;left:17px;top:608px;width:1027px;height:40px;background:#ffffff"></div><div style="position:absolute;left:17px;top:647px;width:1027px;height:1px;background:#a8a8a8"></div><div style="position:absolute;left:71px;top:608px;width:1px;height:40px;background:#a0a0a0"></div><div style="position:absolute;left:800px;top:608px;width:1px;height:40px;background:#a0a0a0"></div><div style="position:absolute;left:37px;top:622px;width:13px;height:13px;box-sizing:border-box;border:1px solid #8e8f8f;background:linear-gradient(135deg,#dcdcdc,#f6f6f6);box-shadow:inset 0 0 0 1px #f4f4f4"></div><div style="position:absolute;left:74.5px;top:622.64px;font:400 12px/13.80px 'Liberation Sans', sans-serif;color:#000;white-space:pre;letter-spacing:0.430px;">Walk through your current process and analyze its current state to define:</div><svg style="position:absolute;left:804px;top:621.5px" width="16" height="13" viewBox="0 0 16 13"><path d="M3 4L8.5 2L13 1.5L14.8 8L11.5 12L5 12Z" fill="#e6eef8"/><path d="M4 5L8 3.5L10 10L6 11Z" fill="#fafcff"/><path d="M7.5 3L11.5 11.5" stroke="#6f95c4" stroke-width="1.7"/><path d="M0.8 3.2L3.3 10.8" stroke="#a4784c" stroke-width="1.7"/><path d="M12.8 1Q15.5 4.5 15.4 8.5L12.8 10.8" stroke="#b48e64" stroke-width="1.6" fill="none"/><path d="M4.5 11.6L11.8 12.2" stroke="#4a4a50" stroke-width="1.3"/><circle cx="8.8" cy="2.2" r="0.8" fill="#666"/><circle cx="11.6" cy="3.4" r="0.8" fill="#666"/></svg><div style="position:absolute;left:824.2px;top:623.14px;font:400 12px/13.80px 'Liberation Sans', sans-serif;color:#000;white-space:pre;letter-spacing:0.157px;">Business Process Discovery Checklist</div><div style="position:absolute;left:17px;top:648px;width:1027px;height:149px;background:#fff"></div><div style="position:absolute;left:17px;top:796px;width:1027px;height:1px;background:#a0a0a0"></div><div style="position:absolute;left:37.1px;top:654.14px;font:400 12px/13.80px 'Liberation Sans', sans-serif;color:#5c1a5e;white-space:pre;letter-spacing:0.000px;">o</div><div style="position:absolute;left:92.8px;top:654.14px;font:400 12px/13.80px 'Liberation Sans', sans-serif;color:#5c1a5e;white-space:pre;letter-spacing:0.417px;">Where are existing process bottlenecks;</div><div style="position:absolute;left:37.1px;top:670.14px;font:400 12px/13.80px 'Liberation Sans', sans-serif;color:#5c1a5e;white-space:pre;letter-spacing:0.000px;">o</div><div style="position:absolute;left:92.8px;top:670.14px;font:400 12px/13.80px 'Liberation Sans', sans-serif;color:#5c1a5e;white-space:pre;letter-spacing:0.439px;">Where are any loose areas of uncertainty and empiricism</div><div style="position:absolute;left:37.1px;top:686.14px;font:400 12px/13.80px 'Liberation Sans', sans-serif;color:#5c1a5e;white-space:pre;letter-spacing:0.337px;">in activity;</div><div style="position:absolute;left:37.1px;top:702.14px;font:400 12px/13.80px 'Liberation Sans', sans-serif;color:#5c1a5e;white-space:pre;letter-spacing:0.000px;">o</div><div style="position:absolute;left:92.8px;top:702.14px;font:400 12px/13.80px 'Liberation Sans', sans-serif;color:#5c1a5e;white-space:pre;letter-spacing:0.555px;">Where are areas of “slow” communication (where</div><div style="position:absolute;left:37.1px;top:718.14px;font:400 12px/13.80px 'Liberation Sans', sans-serif;color:#5c1a5e;white-space:pre;letter-spacing:0.433px;">contacts are established in ad-hoc way);</div><div style="position:absolute;left:37.1px;top:734.14px;font:400 12px/13.80px 'Liberation Sans', sans-serif;color:#5c1a5e;white-space:pre;letter-spacing:0.000px;">o</div><div style="position:absolute;left:92.8px;top:734.14px;font:400 12px/13.80px 'Liberation Sans', sans-serif;color:#5c1a5e;white-space:pre;letter-spacing:0.537px;">Where working information “flows away” - gets lost in</div><div style="position:absolute;left:37.1px;top:750.14px;font:400 12px/13.80px 'Liberation Sans', sans-serif;color:#5c1a5e;white-space:pre;letter-spacing:0.493px;">multiple informal emails, etc;</div><div style="position:absolute;left:37.1px;top:766.14px;font:400 12px/13.80px 'Liberation Sans', sans-serif;color:#5c1a5e;white-space:pre;letter-spacing:0.000px;">o</div><div style="position:absolute;left:92.8px;top:766.14px;font:400 12px/13.80px 'Liberation Sans', sans-serif;color:#5c1a5e;white-space:pre;letter-spacing:0.469px;">Where time and energy are wasted by ineffective actions</div><div style="position:absolute;left:37.1px;top:782.14px;font:400 12px/13.80px 'Liberation Sans', sans-serif;color:#5c1a5e;white-space:pre;letter-spacing:0.446px;">and interactions;</div><div style="position:absolute;left:17px;top:797px;width:1027px;height:40px;background:#c0c0c0"></div><div style="position:absolute;left:17px;top:836px;width:1027px;height:1px;background:#a8a8a8"></div><div style="position:absolute;left:71px;top:797px;width:1px;height:40px;background:#a0a0a0"></div><div style="position:absolute;left:800px;top:797px;width:1px;height:40px;background:#a0a0a0"></div><div style="position:absolute;left:37px;top:811px;width:13px;height:13px;box-sizing:border-box;border:1px solid #8e8f8f;background:linear-gradient(135deg,#dcdcdc,#f6f6f6);box-shadow:inset 0 0 0 1px #f4f4f4"></div><div style="position:absolute;left:74.5px;top:811.64px;font:400 12px/13.80px 'Liberation Sans', sans-serif;color:#000;white-space:pre;letter-spacing:0.421px;">Recast your mindset from &quot;as-is&quot; analysis to seeking &quot;to-be&quot; opportunities;</div><svg style="position:absolute;left:804px;top:810.5px" width="16" height="13" viewBox="0 0 16 13"><path d="M3 4L8.5 2L13 1.5L14.8 8L11.5 12L5 12Z" fill="#e6eef8"/><path d="M4 5L8 3.5L10 10L6 11Z" fill="#fafcff"/><path d="M7.5 3L11.5 11.5" stroke="#6f95c4" stroke-width="1.7"/><path d="M0.8 3.2L3.3 10.8" stroke="#a4784c" stroke-width="1.7"/><path d="M12.8 1Q15.5 4.5 15.4 8.5L12.8 10.8" stroke="#b48e64" stroke-width="1.6" fill="none"/><path d="M4.5 11.6L11.8 12.2" stroke="#4a4a50" stroke-width="1.3"/><circle cx="8.8" cy="2.2" r="0.8" fill="#666"/><circle cx="11.6" cy="3.4" r="0.8" fill="#666"/></svg><div style="position:absolute;left:824.2px;top:812.14px;font:400 12px/13.80px 'Liberation Sans', sans-serif;color:#000;white-space:pre;letter-spacing:0.157px;">Business Process Discovery Checklist</div><div style="position:absolute;left:17px;top:837px;width:1027px;height:40px;background:#ffffff"></div><div style="position:absolute;left:17px;top:876px;width:1027px;height:1px;background:#a8a8a8"></div><div style="position:absolute;left:71px;top:837px;width:1px;height:40px;background:#a0a0a0"></div><div style="position:absolute;left:800px;top:837px;width:1px;height:40px;background:#a0a0a0"></div><div style="position:absolute;left:37px;top:851px;width:13px;height:13px;box-sizing:border-box;border:1px solid #8e8f8f;background:linear-gradient(135deg,#dcdcdc,#f6f6f6);box-shadow:inset 0 0 0 1px #f4f4f4"></div><div style="position:absolute;left:74.5px;top:843.64px;font:400 12px/13.80px 'Liberation Sans', sans-serif;color:#000;white-space:pre;letter-spacing:0.451px;">Consider discovering improvements by implementing more automation - where a machine can do steps faster and better</div><div style="position:absolute;left:74.5px;top:859.64px;font:400 12px/13.80px 'Liberation Sans', sans-serif;color:#000;white-space:pre;letter-spacing:0.404px;">instead of having employee to do these things manually;</div><svg style="position:absolute;left:804px;top:850.5px" width="16" height="13" viewBox="0 0 16 13"><path d="M3 4L8.5 2L13 1.5L14.8 8L11.5 12L5 12Z" fill="#e6eef8"/><path d="M4 5L8 3.5L10 10L6 11Z" fill="#fafcff"/><path d="M7.5 3L11.5 11.5" stroke="#6f95c4" stroke-width="1.7"/><path d="M0.8 3.2L3.3 10.8" stroke="#a4784c" stroke-width="1.7"/><path d="M12.8 1Q15.5 4.5 15.4 8.5L12.8 10.8" stroke="#b48e64" stroke-width="1.6" fill="none"/><path d="M4.5 11.6L11.8 12.2" stroke="#4a4a50" stroke-width="1.3"/><circle cx="8.8" cy="2.2" r="0.8" fill="#666"/><circle cx="11.6" cy="3.4" r="0.8" fill="#666"/></svg><div style="position:absolute;left:824.2px;top:852.14px;font:400 12px/13.80px 'Liberation Sans', sans-serif;color:#000;white-space:pre;letter-spacing:0.157px;">Business Process Discovery Checklist</div><div style="position:absolute;left:17px;top:877px;width:1027px;height:40px;background:#c0c0c0"></div><div style="position:absolute;left:17px;top:916px;width:1027px;height:1px;background:#a8a8a8"></div><div style="position:absolute;left:71px;top:877px;width:1px;height:40px;background:#a0a0a0"></div><div style="position:absolute;left:800px;top:877px;width:1px;height:40px;background:#a0a0a0"></div><div style="position:absolute;left:37px;top:891px;width:13px;height:13px;box-sizing:border-box;border:1px solid #8e8f8f;background:linear-gradient(135deg,#dcdcdc,#f6f6f6);box-shadow:inset 0 0 0 1px #f4f4f4"></div><div style="position:absolute;left:74.5px;top:883.64px;font:400 12px/13.80px 'Liberation Sans', sans-serif;color:#000;white-space:pre;letter-spacing:0.459px;">Consider geographic improvement - outsourcing parts of your process to other companies who can do them better and at</div><div style="position:absolute;left:74.5px;top:899.64px;font:400 12px/13.80px 'Liberation Sans', sans-serif;color:#000;white-space:pre;letter-spacing:0.431px;">lower costs;</div><svg style="position:absolute;left:804px;top:890.5px" width="16" height="13" viewBox="0 0 16 13"><path d="M3 4L8.5 2L13 1.5L14.8 8L11.5 12L5 12Z" fill="#e6eef8"/><path d="M4 5L8 3.5L10 10L6 11Z" fill="#fafcff"/><path d="M7.5 3L11.5 11.5" stroke="#6f95c4" stroke-width="1.7"/><path d="M0.8 3.2L3.3 10.8" stroke="#a4784c" stroke-width="1.7"/><path d="M12.8 1Q15.5 4.5 15.4 8.5L12.8 10.8" stroke="#b48e64" stroke-width="1.6" fill="none"/><path d="M4.5 11.6L11.8 12.2" stroke="#4a4a50" stroke-width="1.3"/><circle cx="8.8" cy="2.2" r="0.8" fill="#666"/><circle cx="11.6" cy="3.4" r="0.8" fill="#666"/></svg><div style="position:absolute;left:824.2px;top:892.14px;font:400 12px/13.80px 'Liberation Sans', sans-serif;color:#000;white-space:pre;letter-spacing:0.157px;">Business Process Discovery Checklist</div><div style="position:absolute;left:0;top:917px;width:1044px;height:28px;overflow:hidden"><div style="position:absolute;left:17px;top:0px;width:1027px;height:40px;background:#ffffff"></div><div style="position:absolute;left:17px;top:39px;width:1027px;height:1px;background:#a8a8a8"></div><div style="position:absolute;left:71px;top:0px;width:1px;height:40px;background:#a0a0a0"></div><div style="position:absolute;left:800px;top:0px;width:1px;height:40px;background:#a0a0a0"></div><div style="position:absolute;left:37px;top:14px;width:13px;height:13px;box-sizing:border-box;border:1px solid #8e8f8f;background:linear-gradient(135deg,#dcdcdc,#f6f6f6);box-shadow:inset 0 0 0 1px #f4f4f4"></div><div style="position:absolute;left:74.5px;top:14.64px;font:400 12px/13.80px 'Liberation Sans', sans-serif;color:#000;white-space:pre;letter-spacing:0.430px;">Consider disintermediation - reducing mediators between certain steps or process participants;</div><svg style="position:absolute;left:804px;top:13.5px" width="16" height="13" viewBox="0 0 16 13"><path d="M3 4L8.5 2L13 1.5L14.8 8L11.5 12L5 12Z" fill="#e6eef8"/><path d="M4 5L8 3.5L10 10L6 11Z" fill="#fafcff"/><path d="M7.5 3L11.5 11.5" stroke="#6f95c4" stroke-width="1.7"/><path d="M0.8 3.2L3.3 10.8" stroke="#a4784c" stroke-width="1.7"/><path d="M12.8 1Q15.5 4.5 15.4 8.5L12.8 10.8" stroke="#b48e64" stroke-width="1.6" fill="none"/><path d="M4.5 11.6L11.8 12.2" stroke="#4a4a50" stroke-width="1.3"/><circle cx="8.8" cy="2.2" r="0.8" fill="#666"/><circle cx="11.6" cy="3.4" r="0.8" fill="#666"/></svg><div style="position:absolute;left:824.2px;top:15.14px;font:400 12px/13.80px 'Liberation Sans', sans-serif;color:#000;white-space:pre;letter-spacing:0.157px;">Business Process Discovery Checklist</div></div><div style="position:absolute;left:2px;top:945px;width:1042px;height:1px;background:#9c9c9c"></div><div style="position:absolute;left:2px;top:946px;width:1042px;height:1px;background:#e6e6e6"></div><div style="position:absolute;left:2px;top:947px;width:1042px;height:24px;background:#c0c0c0"></div><div style="position:absolute;left:73px;top:948px;width:727px;height:21px;background:#e9ebee"></div><div style="position:absolute;left:76.9px;top:954.44px;font:400 12px/13.80px 'Liberation Sans', sans-serif;color:#000;white-space:pre;letter-spacing:0.244px;">Count: 12</div><div style="position:absolute;left:0px;top:971px;width:1062px;height:2px;background:#6a6a6a"></div><div style="position:absolute;left:1044px;top:238px;width:17px;height:732px;background:#ececec;box-shadow:inset 1px 0 0 #d0d0d0"></div><svg style="position:absolute;left:1049px;top:246px" width="8" height="6" viewBox="0 0 8 6"><path d="M0.5 5L3.8 1.5L7 4.5L6 5L3.8 3L1.5 5.5Z" fill="#222"/></svg><div style="position:absolute;left:1046px;top:257px;width:14px;height:588px;box-sizing:border-box;border:1px solid #b4b4b4;border-radius:2px;background:linear-gradient(90deg,#f6f6f6,#e8e8e8 50%,#d4d4d4 90%,#c8c8c8)"></div><div style="position:absolute;left:1049px;top:547px;width:7px;height:2px;background:#555;opacity:.85"></div><div style="position:absolute;left:1049px;top:550px;width:7px;height:2px;background:#555;opacity:.85"></div><div style="position:absolute;left:1049px;top:553px;width:7px;height:2px;background:#555;opacity:.85"></div><svg style="position:absolute;left:1050px;top:962px" width="7" height="4" viewBox="0 0 7 4"><path d="M0 0H7L3.5 4Z" fill="#333"/></svg><div style="position:absolute;left:1061px;top:74px;width:219px;height:899px;background:#eceef4"></div><div style="position:absolute;left:1061px;top:73px;width:218px;height:455px;box-sizing:border-box;border-left:2px solid #111;border-top:2px solid #111;border-bottom:2px solid #111;border-right:1px solid #8a8a8a;border-radius:3px 3px 0 0;background:#efefef;box-shadow:inset -1px 0 0 #d8d8d8"></div><div style="position:absolute;left:1064px;top:75px;width:213px;height:20px;background:linear-gradient(#fdfdfd,#f6f6f6);border-radius:3px;box-shadow:inset 0 -1px 0 #e2e2e2"></div><div style="position:absolute;left:1067.7px;top:80.41px;font:400 10.6px/12.19px 'Liberation Sans', sans-serif;color:#000;white-space:pre;letter-spacing:-0.078px;">Filters Bar</div><div style="position:absolute;left:1228px;top:79px;width:14px;height:14px;box-sizing:border-box;border:1px solid #5a6272;border-radius:2px;background:linear-gradient(#f8f9fc,#c4cad6);box-shadow:inset 0 0 0 1px #e8ecf4"></div><div style="position:absolute;left:1232px;top:84px;width:6px;height:4px;box-sizing:border-box;border:1px solid #2a3040;background:#dde2ec"></div><svg style="position:absolute;left:1245px;top:79px" width="12" height="14" viewBox="0 0 12 14"><path d="M3 1.5H9L8 3.5L10.5 7H1.5L4 3.5Z" fill="#f2f2f2" stroke="#5a5a5a" stroke-width="1"/><path d="M6 7.5V13" stroke="#555" stroke-width="1.3"/></svg><div style="position:absolute;left:1260px;top:79px;width:14px;height:14px;background:linear-gradient(#dc8e88,#c05a52 55%,#b04a42);border:1px solid #4a1410;border-radius:2px;box-sizing:border-box"></div><svg style="position:absolute;left:1263px;top:82px" width="8" height="8" viewBox="0 0 8 8"><path d="M1.8 1.8L6.2 6.2M6.2 1.8L1.8 6.2" stroke="#fff" stroke-width="1.9"/></svg><div style="position:absolute;left:1063px;top:95px;width:214px;height:32px;background:linear-gradient(#fdfdfe 0px,#f3f4fa 10px,#dadef0 13px,#d2d7ec 31px)"></div><div style="position:absolute;left:1068px;top:102px;width:2px;height:2px;background:#a3aabf"></div><div style="position:absolute;left:1068px;top:105px;width:2px;height:2px;background:#a3aabf"></div><div style="position:absolute;left:1068px;top:108px;width:2px;height:2px;background:#a3aabf"></div><div style="position:absolute;left:1068px;top:111px;width:2px;height:2px;background:#a3aabf"></div><div style="position:absolute;left:1068px;top:114px;width:2px;height:2px;background:#a3aabf"></div><div style="position:absolute;left:1068px;top:117px;width:2px;height:2px;background:#a3aabf"></div><div style="position:absolute;left:1068px;top:120px;width:2px;height:2px;background:#a3aabf"></div><div style="position:absolute;left:1068px;top:123px;width:2px;height:2px;background:#a3aabf"></div><div style="position:absolute;left:1072px;top:102px;width:93px;height:22px;box-sizing:border-box;border:1px solid #a4a4a4;background:#b6d3f0"></div><div style="position:absolute;left:1145px;top:103px;width:19px;height:20px;background:#f4f4f4;box-shadow:inset 1px 0 0 #c8c8c8"></div><svg style="position:absolute;left:1151px;top:111px" width="7" height="5" viewBox="0 0 7 5"><path d="M0 0H7L3.5 4Z" fill="#a8a8a8"/></svg><div style="position:absolute;left:1076.4px;top:106.84px;font:400 12px/13.80px 'Liberation Sans', sans-serif;color:#8da4bd;white-space:pre;letter-spacing:-0.149px;">Custom</div><svg style="position:absolute;left:1170px;top:105px" width="16" height="16" viewBox="0 0 16 16"><rect x="7" y="0.5" width="8" height="10" fill="#f4f6ff" stroke="#9aa4c8"/><path d="M3 12L10 5" stroke="#3aa03a" stroke-width="3.5"/><path d="M8 3H12V7" stroke="#3aa03a" stroke-width="2" fill="none"/><rect x="0.5" y="9" width="7" height="6" fill="#c0c8f0" stroke="#5a64c0"/></svg><svg style="position:absolute;left:1189px;top:111px" width="6" height="4" viewBox="0 0 6 4"><path d="M0 0H6L3 3Z" fill="#000"/></svg><svg style="position:absolute;left:1204px;top:106px" width="16" height="14" viewBox="0 0 16 14"><path d="M1 9L8 1.5Q10 0 12 1.5L14 3.5Q15.5 5.5 14 7L8 13H4Z" fill="#f0f0f0" stroke="#9a9a9a" stroke-width="1.3"/><path d="M7 13.5H16" stroke="#8a8a8a" stroke-width="1.5"/></svg><svg style="position:absolute;left:1230px;top:107px" width="13" height="13" viewBox="0 0 13 13"><path d="M1.5 1.5L11 11M11 1.5L1.5 11" stroke="#a8aaae" stroke-width="2.6"/></svg><svg style="position:absolute;left:1251px;top:118px" width="5" height="3" viewBox="0 0 5 3"><path d="M0 0H5L2.5 3Z" fill="#000"/></svg><div style="position:absolute;left:1064px;top:127px;width:213px;height:1px;background:#808080"></div><div style="position:absolute;left:1064px;top:128px;width:1px;height:190px;background:#a0a0a0"></div><div style="position:absolute;left:1065px;top:128px;width:212px;height:189px;background:#ededed"></div><div style="position:absolute;left:1064px;top:317px;width:213px;height:1px;background:#a0a0a0"></div><div style="position:absolute;left:1164px;top:128px;width:1px;height:189px;background:#a0a0a0"></div><div style="position:absolute;left:1066px;top:149px;width:210px;height:0;border-top:1px dotted #9a9a9a"></div><div style="position:absolute;left:1081.5px;top:128px;width:82px;height:20px;overflow:hidden"><div style="position:absolute;left:0px;top:3.67px;font:400 11.3px/12.99px 'Liberation Sans', sans-serif;color:#000;white-space:pre;letter-spacing:-0.295px;">Completion</div></div><div style="position:absolute;left:1259px;top:129px;width:17px;height:19px;box-sizing:border-box;border:1px solid #8e8e8e;background:linear-gradient(#fafafa,#e8e8e8 50%,#d4d4d4)"></div><svg style="position:absolute;left:1263px;top:136px" width="8" height="5" viewBox="0 0 8 5"><path d="M0 0H8L4 4Z" fill="#000"/></svg><div style="position:absolute;left:1066px;top:170px;width:210px;height:0;border-top:1px dotted #9a9a9a"></div><div style="position:absolute;left:1081.5px;top:149px;width:82px;height:20px;overflow:hidden"><div style="position:absolute;left:0px;top:3.67px;font:400 11.3px/12.99px 'Liberation Sans', sans-serif;color:#000;white-space:pre;letter-spacing:-0.391px;">Due Date</div></div><div style="position:absolute;left:1259px;top:150px;width:17px;height:19px;box-sizing:border-box;border:1px solid #8e8e8e;background:linear-gradient(#fafafa,#e8e8e8 50%,#d4d4d4)"></div><svg style="position:absolute;left:1263px;top:157px" width="8" height="5" viewBox="0 0 8 5"><path d="M0 0H8L4 4Z" fill="#000"/></svg><div style="position:absolute;left:1066px;top:191px;width:210px;height:0;border-top:1px dotted #9a9a9a"></div><div style="position:absolute;left:1081.5px;top:170px;width:82px;height:20px;overflow:hidden"><div style="position:absolute;left:0px;top:3.67px;font:400 11.3px/12.99px 'Liberation Sans', sans-serif;color:#000;white-space:pre;letter-spacing:0.194px;">Status</div></div><div style="position:absolute;left:1259px;top:171px;width:17px;height:19px;box-sizing:border-box;border:1px solid #8e8e8e;background:linear-gradient(#fafafa,#e8e8e8 50%,#d4d4d4)"></div><svg style="position:absolute;left:1263px;top:178px" width="8" height="5" viewBox="0 0 8 5"><path d="M0 0H8L4 4Z" fill="#000"/></svg><div style="position:absolute;left:1066px;top:212px;width:210px;height:0;border-top:1px dotted #9a9a9a"></div><div style="position:absolute;left:1081.5px;top:191px;width:82px;height:20px;overflow:hidden"><div style="position:absolute;left:0px;top:3.67px;font:400 11.3px/12.99px 'Liberation Sans', sans-serif;color:#000;white-space:pre;letter-spacing:0.121px;">Priority</div></div><div style="position:absolute;left:1259px;top:192px;width:17px;height:19px;box-sizing:border-box;border:1px solid #8e8e8e;background:linear-gradient(#fafafa,#e8e8e8 50%,#d4d4d4)"></div><svg style="position:absolute;left:1263px;top:199px" width="8" height="5" viewBox="0 0 8 5"><path d="M0 0H8L4 4Z" fill="#000"/></svg><div style="position:absolute;left:1066px;top:233px;width:210px;height:0;border-top:1px dotted #9a9a9a"></div><div style="position:absolute;left:1081.5px;top:212px;width:82px;height:20px;overflow:hidden"><div style="position:absolute;left:0px;top:3.67px;font:400 11.3px/12.99px 'Liberation Sans', sans-serif;color:#000;white-space:pre;letter-spacing:-0.564px;">Task Name</div></div><div style="position:absolute;left:1066px;top:254px;width:210px;height:0;border-top:1px dotted #9a9a9a"></div><div style="position:absolute;left:1081.5px;top:233px;width:82px;height:20px;overflow:hidden"><div style="position:absolute;left:0px;top:3.67px;font:400 11.3px/12.99px 'Liberation Sans', sans-serif;color:#000;white-space:pre;letter-spacing:-0.200px;">Date Created</div></div><div style="position:absolute;left:1259px;top:234px;width:17px;height:19px;box-sizing:border-box;border:1px solid #8e8e8e;background:linear-gradient(#fafafa,#e8e8e8 50%,#d4d4d4)"></div><svg style="position:absolute;left:1263px;top:241px" width="8" height="5" viewBox="0 0 8 5"><path d="M0 0H8L4 4Z" fill="#000"/></svg><div style="position:absolute;left:1066px;top:275px;width:210px;height:0;border-top:1px dotted #9a9a9a"></div><div style="position:absolute;left:1081.5px;top:254px;width:82px;height:20px;overflow:hidden"><div style="position:absolute;left:0px;top:3.67px;font:400 11.3px/12.99px 'Liberation Sans', sans-serif;color:#000;white-space:pre;letter-spacing:-0.308px;">Date Last Modifie</div></div><div style="position:absolute;left:1259px;top:255px;width:17px;height:19px;box-sizing:border-box;border:1px solid #8e8e8e;background:linear-gradient(#fafafa,#e8e8e8 50%,#d4d4d4)"></div><svg style="position:absolute;left:1263px;top:262px" width="8" height="5" viewBox="0 0 8 5"><path d="M0 0H8L4 4Z" fill="#000"/></svg><div style="position:absolute;left:1066px;top:296px;width:210px;height:0;border-top:1px dotted #9a9a9a"></div><div style="position:absolute;left:1081.5px;top:275px;width:82px;height:20px;overflow:hidden"><div style="position:absolute;left:0px;top:3.67px;font:400 11.3px/12.99px 'Liberation Sans', sans-serif;color:#000;white-space:pre;letter-spacing:-0.620px;">Date Opened</div></div><div style="position:absolute;left:1259px;top:276px;width:17px;height:19px;box-sizing:border-box;border:1px solid #8e8e8e;background:linear-gradient(#fafafa,#e8e8e8 50%,#d4d4d4)"></div><svg style="position:absolute;left:1263px;top:283px" width="8" height="5" viewBox="0 0 8 5"><path d="M0 0H8L4 4Z" fill="#000"/></svg><div style="position:absolute;left:1081.5px;top:296px;width:82px;height:20px;overflow:hidden"><div style="position:absolute;left:0px;top:3.67px;font:400 11.3px/12.99px 'Liberation Sans', sans-serif;color:#000;white-space:pre;letter-spacing:-0.395px;">Date Completed</div></div><div style="position:absolute;left:1259px;top:297px;width:17px;height:19px;box-sizing:border-box;border:1px solid #8e8e8e;background:linear-gradient(#fafafa,#e8e8e8 50%,#d4d4d4)"></div><svg style="position:absolute;left:1263px;top:304px" width="8" height="5" viewBox="0 0 8 5"><path d="M0 0H8L4 4Z" fill="#000"/></svg><div style="position:absolute;left:1061px;top:530px;width:218px;height:443px;box-sizing:border-box;border-left:2px solid #111;border-top:2px solid #111;border-bottom:2px solid #222;border-right:1px solid #8a8a8a;border-radius:3px 3px 0 0;background:#efefef;box-shadow:inset -1px 0 0 #d8d8d8"></div><div style="position:absolute;left:1063px;top:532px;width:214px;height:19px;background:linear-gradient(#fdfdfd,#f6f6f6);box-shadow:inset 0 -1px 0 #e2e2e2"></div><div style="position:absolute;left:1067.7px;top:535.57px;font:400 11.3px/12.99px 'Liberation Sans', sans-serif;color:#000;white-space:pre;letter-spacing:-0.125px;">Note</div><div style="position:absolute;left:1228px;top:535px;width:14px;height:14px;box-sizing:border-box;border:1px solid #5a6272;border-radius:2px;background:linear-gradient(#f8f9fc,#c4cad6);box-shadow:inset 0 0 0 1px #e8ecf4"></div><div style="position:absolute;left:1232px;top:540px;width:6px;height:4px;box-sizing:border-box;border:1px solid #2a3040;background:#dde2ec"></div><svg style="position:absolute;left:1245px;top:535px" width="12" height="14" viewBox="0 0 12 14"><path d="M3 1.5H9L8 3.5L10.5 7H1.5L4 3.5Z" fill="#f2f2f2" stroke="#5a5a5a" stroke-width="1"/><path d="M6 7.5V13" stroke="#555" stroke-width="1.3"/></svg><div style="position:absolute;left:1260px;top:535px;width:14px;height:14px;background:linear-gradient(#dc8e88,#c05a52 55%,#b04a42);border:1px solid #4a1410;border-radius:2px;box-sizing:border-box"></div><svg style="position:absolute;left:1263px;top:538px" width="8" height="8" viewBox="0 0 8 8"><path d="M1.8 1.8L6.2 6.2M6.2 1.8L1.8 6.2" stroke="#fff" stroke-width="1.9"/></svg><div style="position:absolute;left:1063px;top:551px;width:214px;height:32px;background:linear-gradient(#fdfdfe 0px,#f3f4fa 10px,#dadef0 13px,#d2d7ec 31px)"></div><div style="position:absolute;left:1063px;top:582px;width:214px;height:1px;background:#a9adb8"></div><div style="position:absolute;left:1068px;top:557px;width:2px;height:2px;background:#a3aabf"></div><div style="position:absolute;left:1068px;top:560px;width:2px;height:2px;background:#a3aabf"></div><div style="position:absolute;left:1068px;top:563px;width:2px;height:2px;background:#a3aabf"></div><div style="position:absolute;left:1068px;top:566px;width:2px;height:2px;background:#a3aabf"></div><div style="position:absolute;left:1068px;top:569px;width:2px;height:2px;background:#a3aabf"></div><div style="position:absolute;left:1068px;top:572px;width:2px;height:2px;background:#a3aabf"></div><div style="position:absolute;left:1068px;top:575px;width:2px;height:2px;background:#a3aabf"></div><div style="position:absolute;left:1068px;top:578px;width:2px;height:2px;background:#a3aabf"></div><div style="position:absolute;left:1099px;top:559px;width:1px;height:19px;background:#6d7280"></div><div style="position:absolute;left:1100px;top:559px;width:1px;height:19px;background:#f4f6fb"></div><div style="position:absolute;left:1152px;top:559px;width:1px;height:19px;background:#6d7280"></div><div style="position:absolute;left:1153px;top:559px;width:1px;height:19px;background:#f4f6fb"></div><div style="position:absolute;left:1181px;top:559px;width:1px;height:19px;background:#6d7280"></div><div style="position:absolute;left:1182px;top:559px;width:1px;height:19px;background:#f4f6fb"></div><svg style="position:absolute;left:1077px;top:560px" width="16" height="16" viewBox="0 0 16 16"><rect x="8" y="0.5" width="7" height="9" fill="#f0f0f0" stroke="#b0b0b0"/><path d="M3 13L10 6" stroke="#b8b8b8" stroke-width="3"/><rect x="0.5" y="9" width="7" height="6" fill="#d8d8d8" stroke="#a8a8a8"/></svg><svg style="position:absolute;left:1107px;top:560px" width="15" height="16" viewBox="0 0 15 16"><rect x="1" y="0.5" width="12" height="15" fill="#fafbff" stroke="#9ab"/><circle cx="6" cy="8" r="4" fill="#cfe6f6" stroke="#7ab"/><path d="M9 11L13 15" stroke="#d08060" stroke-width="2"/></svg><svg style="position:absolute;left:1131px;top:560px" width="15" height="16" viewBox="0 0 15 16"><rect x="3" y="0.5" width="9" height="5" fill="#fafafa" stroke="#99a"/><rect x="0.5" y="5.5" width="14" height="6" rx="1" fill="#dfe3e6" stroke="#8a9298"/><rect x="3" y="10.5" width="9" height="5" fill="#fff" stroke="#99a"/></svg><svg style="position:absolute;left:1160px;top:561px" width="14" height="14" viewBox="0 0 14 14"><rect x="0.5" y="0.5" width="13" height="13" rx="1" fill="#f2f2ee" stroke="#c0c0b8"/><text x="3" y="11.5" font-family="Liberation Serif" font-weight="700" font-size="12" fill="#aaa">B</text></svg><svg style="position:absolute;left:1190px;top:561px" width="14" height="14" viewBox="0 0 14 14"><rect x="0.5" y="0.5" width="13" height="13" rx="1" fill="#f8f8f8" stroke="#a0a0a0"/><path d="M3 3.0H11" stroke="#555"/><path d="M3 5.2H11" stroke="#555"/><path d="M3 7.4H11" stroke="#555"/><path d="M3 9.6H11" stroke="#555"/></svg><svg style="position:absolute;left:1213px;top:561px" width="14" height="14" viewBox="0 0 14 14"><rect x="0.5" y="0.5" width="13" height="13" rx="1" fill="#f8f8f8" stroke="#a0a0a0"/><path d="M3 3.0H11" stroke="#888"/><path d="M4 5.2H10" stroke="#888"/><path d="M3 7.4H11" stroke="#888"/><path d="M4 9.6H10" stroke="#888"/></svg><svg style="position:absolute;left:1237px;top:561px" width="14" height="14" viewBox="0 0 14 14"><circle cx="2" cy="2.5" r="1.8" fill="#888"/><circle cx="2" cy="7" r="1.8" fill="#888"/><circle cx="2" cy="11.5" r="1.8" fill="#888"/><path d="M5 2.5H14M5 7H14M5 11.5H14" stroke="#888" stroke-width="1.5"/></svg><svg style="position:absolute;left:1267px;top:561px" width="8" height="6" viewBox="0 0 8 6"><path d="M0.5 0.5L3 3L0.5 5.5M4.5 0.5L7 3L4.5 5.5" stroke="#000" stroke-width="1.3" fill="none"/></svg><svg style="position:absolute;left:1268px;top:574px" width="5" height="3" viewBox="0 0 5 3"><path d="M0 0H5L2.5 3Z" fill="#000"/></svg><div style="position:absolute;left:1063px;top:583px;width:214px;height:387px;background:#fff"></div><div style="position:absolute;left:1130.6px;top:954.53px;font:700 14px/16.10px 'Liberation Mono', monospace;color:#000;white-space:pre;letter-spacing:0.539px;">todolistsoft.com</div>
</body></html>
